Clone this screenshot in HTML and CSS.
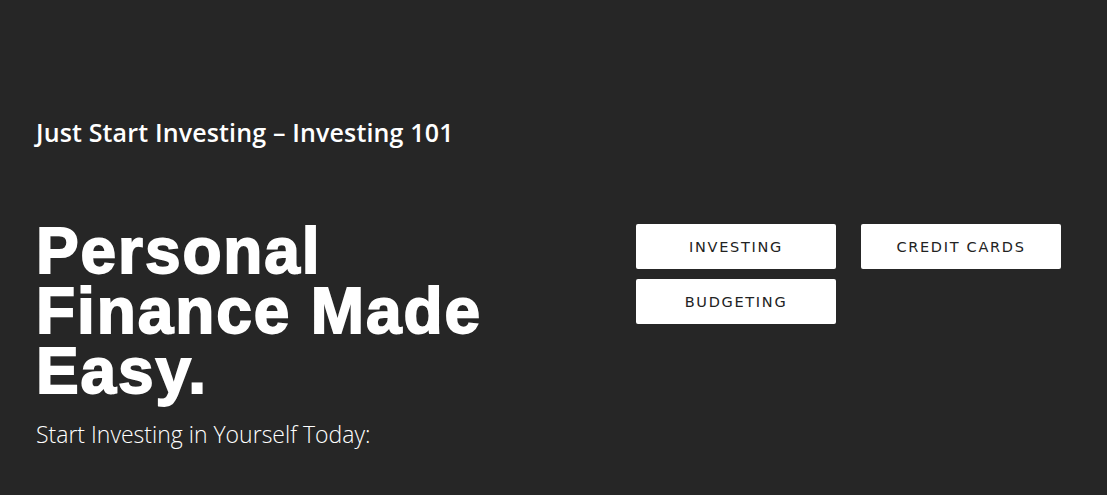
FILE: index.html
```html
<!DOCTYPE html>
<html lang="en">
<head>
<meta charset="utf-8">
<title>Just Start Investing</title>
<link rel="stylesheet" href="styles.css">
</head>
<body>
<div class="page">
  <div class="site-title">Just Start Investing – Investing 101</div>
  <div class="hero">
    <div class="hero-text">
      <h1 class="headline">Personal<br>Finance Made<br>Easy.</h1>
      <p class="tagline">Start Investing in Yourself Today:</p>
    </div>
    <div class="buttons">
      <a class="btn">INVESTING</a>
      <a class="btn">CREDIT CARDS</a>
      <a class="btn">BUDGETING</a>
    </div>
  </div>
</div>
</body>
</html>
```
FILE: styles.css
```css
html, body {
  margin: 0;
  padding: 0;
  background: #262626;
  height: 100%;
}
.page {
  padding: 114px 0 0 36px;
  color: #fff;
}
.site-title {
  font-family: "Open Sans", "Noto Sans", sans-serif;
  font-weight: 600;
  font-size: 25px;
  line-height: 36px;
  letter-spacing: 0.15px;
}
.hero {
  display: flex;
  margin-top: 71px;
}
.hero-text {
  width: 600px;
}
.headline {
  margin: 0;
  padding-top: 0;
  font-family: "Liberation Sans", Arial, sans-serif;
  font-weight: 700;
  font-size: 64px;
  line-height: 60px;
  letter-spacing: 1.9px;
  -webkit-text-stroke: 1.8px #fff;
  color: #fff;
}
.tagline {
  margin: 17px 0 0 0;
  font-family: "Open Sans", "Noto Sans", sans-serif;
  font-weight: 300;
  font-size: 23px;
  line-height: 32px;
  letter-spacing: 0;
}
.buttons {
  display: grid;
  grid-template-columns: 200px 200px;
  grid-auto-rows: 45px;
  column-gap: 25px;
  row-gap: 10px;
  margin-top: 3px;
  align-content: start;
}
.btn {
  background: #fff;
  border-radius: 2px;
  color: #222;
  font-family: "DejaVu Sans", Verdana, sans-serif;
  font-size: 14.5px;
  letter-spacing: 1.7px;
  display: flex;
  align-items: center;
  justify-content: center;
}
```
